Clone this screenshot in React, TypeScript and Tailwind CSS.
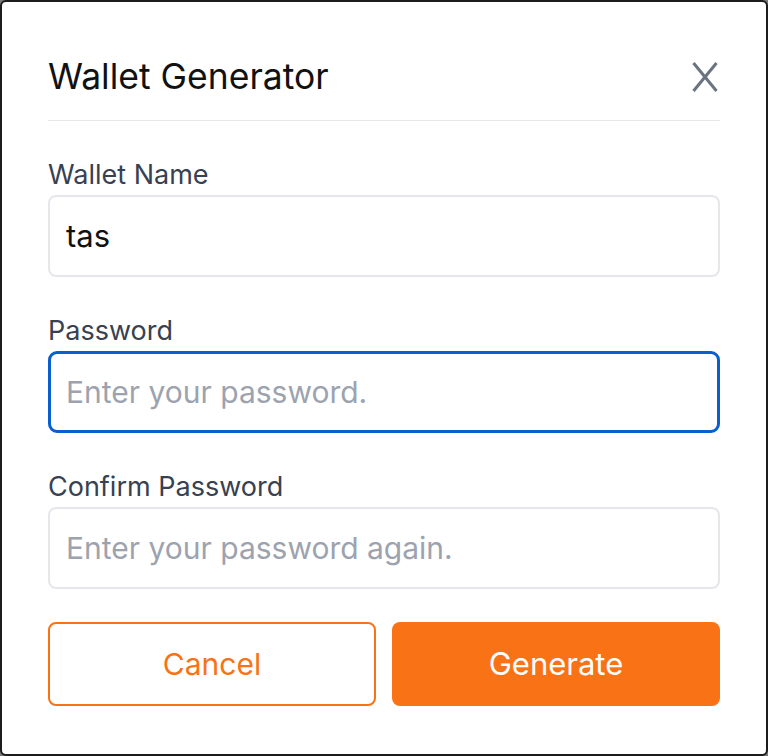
import React from "react";

export default function App() {
  return (
    <div className="w-[768px] h-[756px] bg-[#7a7a7a]" style={{ fontFamily: "Inter, 'Noto Sans', sans-serif" }}>
      <div className="w-full h-full bg-white border-2 border-[#1c1c1c] rounded-[6px] px-[46px] flex flex-col">
        <div className="pt-[55px] pb-[23px] border-b border-[#e5e7eb] flex items-center justify-between">
          <h1 className="text-[35.5px] leading-[40px] text-[#111111] font-normal">Wallet Generator</h1>
          <button className="w-[26px] h-[30px] mr-[2px] text-[#6b7280]" aria-label="Close">
            <svg viewBox="0 0 26 30" width="26" height="30" fill="none" stroke="currentColor" strokeWidth="3" strokeLinecap="butt">
              <path d="M1.5 1 L24.5 29" />
              <path d="M24.5 1 L1.5 29" />
            </svg>
          </button>
        </div>
        <div className="pt-[38px] flex flex-col gap-[38px]">
          <div className="flex flex-col gap-[4px]">
            <label className="text-[27px] leading-[32px] text-[#374151]">Wallet Name</label>
            <div className="h-[82px] border-2 border-[#e5e7eb] rounded-[8px] px-[16px] flex items-center text-[31px] text-[#111111]">tas</div>
          </div>
          <div className="flex flex-col gap-[4px]">
            <label className="text-[27px] leading-[32px] text-[#374151]">Password</label>
            <div className="h-[82px] border-[3px] border-[#0a5fcf] rounded-[9px] px-[15px] flex items-center text-[30px] text-[#9ca3af]">Enter your password.</div>
          </div>
          <div className="flex flex-col gap-[4px]">
            <label className="text-[27px] leading-[32px] text-[#374151]">Confirm Password</label>
            <div className="h-[82px] border-2 border-[#e5e7eb] rounded-[8px] px-[16px] flex items-center text-[30px] text-[#9ca3af]">Enter your password again.</div>
          </div>
        </div>
        <div className="mt-[33px] grid grid-cols-2 gap-[16px]">
          <button className="h-[84px] border-2 border-[#f97316] rounded-[8px] text-[#f97316] text-[30px]">Cancel</button>
          <button className="h-[84px] bg-[#f97316] rounded-[8px] text-white text-[31px]">Generate</button>
        </div>
      </div>
    </div>
  );
}
